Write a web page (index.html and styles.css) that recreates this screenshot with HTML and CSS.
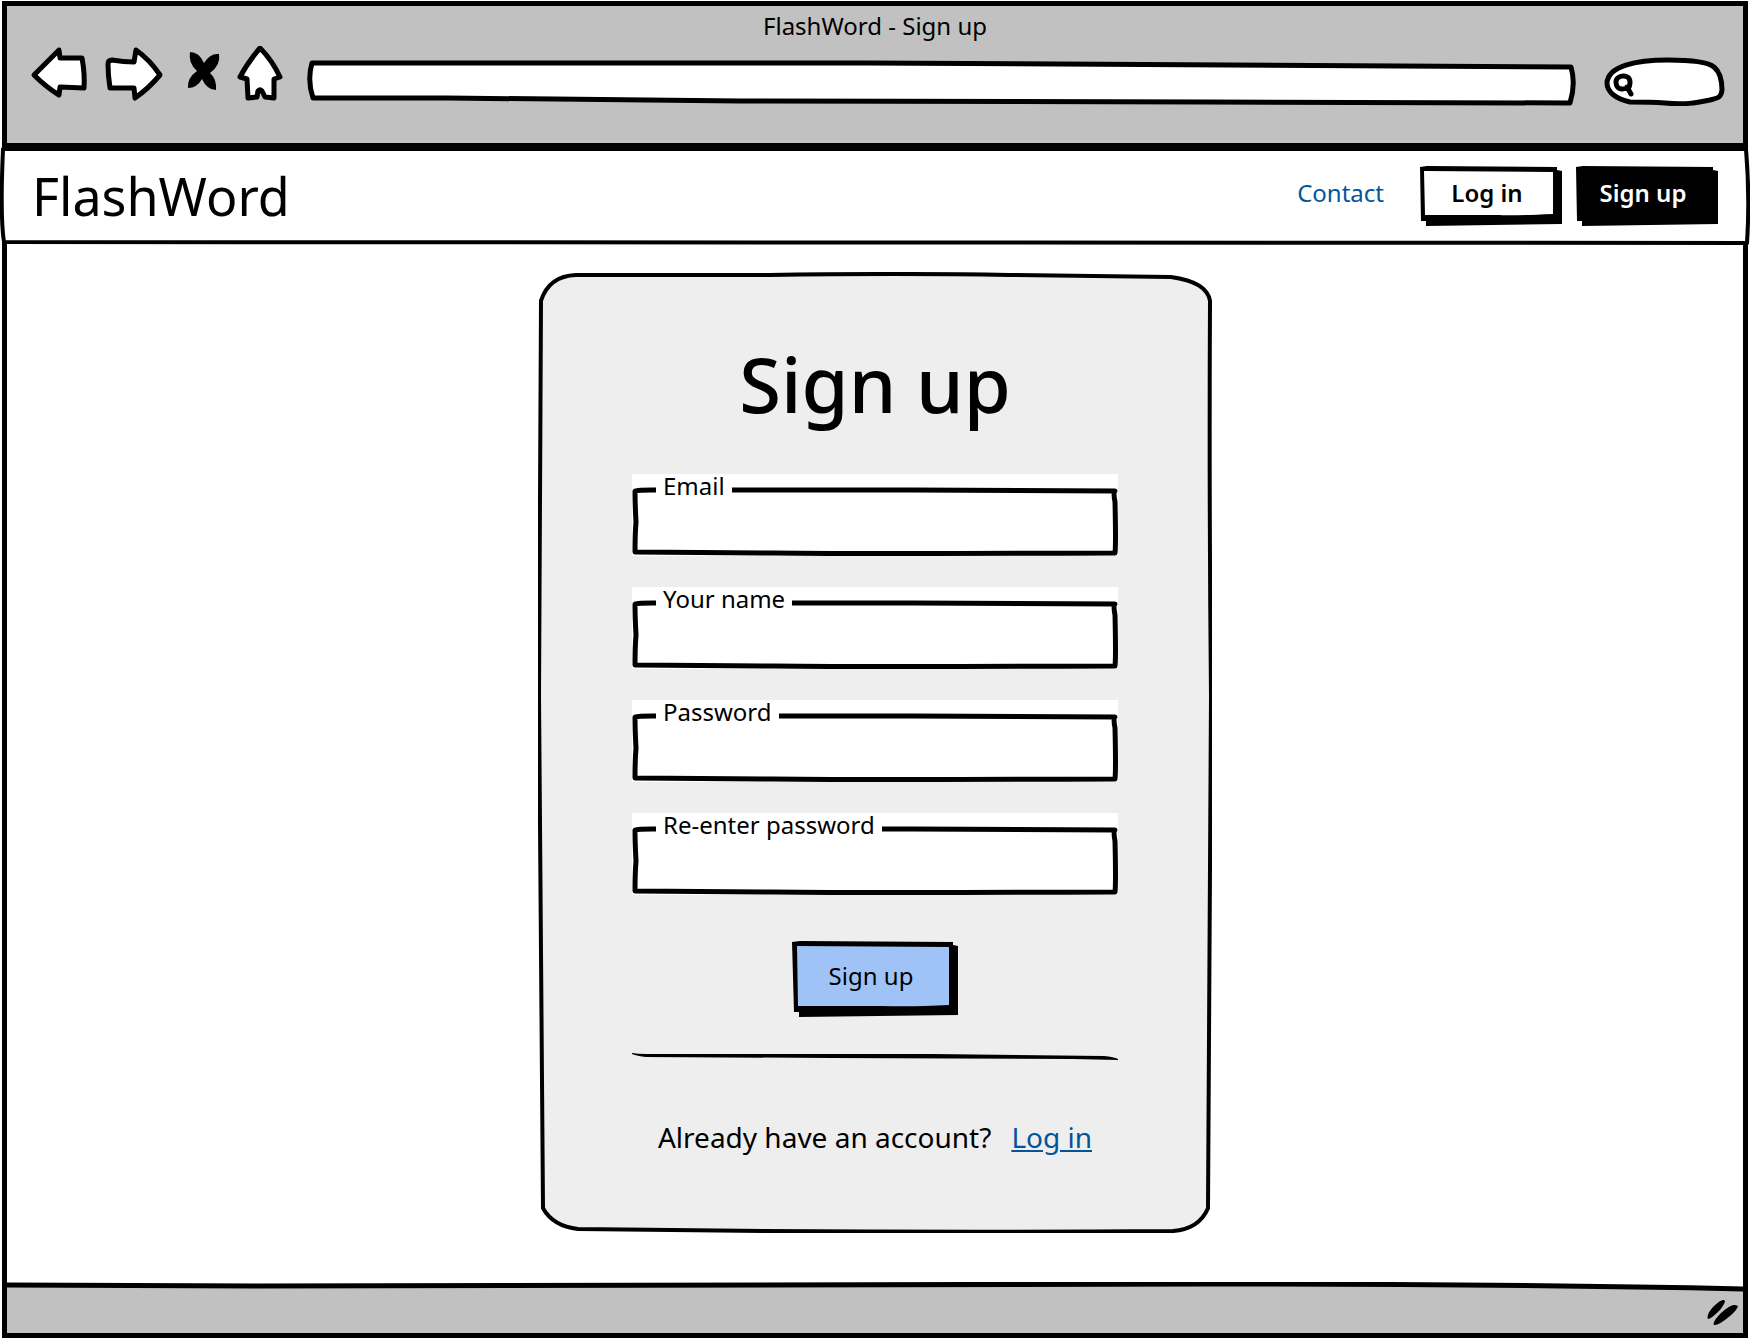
FILE: index.html
```html
<!DOCTYPE html>
<html lang="en">
<head>
<meta charset="utf-8">
<title>FlashWord - Sign up</title>
<link rel="stylesheet" href="styles.css">
</head>
<body>
<div class="window">
  <header class="chrome">
    <div class="chrome-title">FlashWord - Sign up</div>
    <div class="toolbar">
      <div class="toolbar-buttons">
        <button class="tool" type="button" aria-label="Back">
          <svg width="60" height="60" viewBox="29 46 60 60"><path class="ink" d="M59 50 L34 75 Q46 87 59 95 L60 87 L84 88 Q85 74 82 58 L60 58 Z"/></svg>
        </button>
        <button class="tool" type="button" aria-label="Forward">
          <svg width="60" height="60" viewBox="105 46 60 60"><path class="ink" d="M136 50 Q150 60 160 75 Q148 89 135 98 L134 88 L110 88 Q108 75 108 64 Q108 60 112 60 Q124 62 134 62 Z"/></svg>
        </button>
        <button class="tool" type="button" aria-label="Stop">
          <svg width="40" height="60" viewBox="181 46 40 60"><path d="M190 52 Q199 52 204 63 Q210 53 219 54 Q221 65 210 73 Q217 79 216 90 Q207 90 202 79 Q197 88 188 88 Q187 78 197 71 Q188 63 190 52 Z"/></svg>
        </button>
        <button class="tool" type="button" aria-label="Home">
          <svg width="46" height="60" viewBox="237 46 46 60"><path class="ink" d="M260 48 Q248 62 240 77 L247 79 L248 98 L257 97 L258 91 Q260 89 262 91 L265 97 L274 98 L274 79 L280 77 Q272 60 260 48 Z"/></svg>
        </button>
      </div>
      <div class="address">
        <svg class="sketch" viewBox="0 0 1270 60" preserveAspectRatio="none"><path class="ink" d="M5 17 H560 L1264 21 Q1269 38 1263 57 L900 56 L433 55 L140 52 L6 52 Q0 34 5 17 Z"/></svg>
        <input class="bare" type="text" aria-label="Address">
      </div>
      <div class="search">
        <svg class="sketch" viewBox="1601 46 124 60" preserveAspectRatio="none"><path class="ink" d="M1607 83 C1608 66 1636 60 1668 60 C1690 60 1708 62 1714 67 C1720 72 1722 82 1722 90 C1721 98 1718 98 1710 100 C1695 103 1685 105 1665 103 C1652 102 1640 102 1630 102 C1616 99 1607 92 1607 83 Z"/><path class="ink" d="M1616 82 C1616 75 1630 73 1630 82 C1630 90 1626 88 1622 89 C1618 89 1616 86 1616 82 Z M1627 87 L1631 94"/></svg>
        <input class="bare" type="search" aria-label="Search">
      </div>
    </div>
  </header>

  <nav class="site-nav">
    <svg class="sketch" viewBox="0 0 1750 98" preserveAspectRatio="none"><path class="ink thin" d="M3 2 Q0 70 4 95 L1747 96 Q1750 50 1746 2 Z"/></svg>
    <a class="logo" href="#">FlashWord</a>
    <div class="nav-links">
      <a class="contact" href="#">Contact</a>
      <div class="nav-buttons">
        <button class="button nav-button" type="button">
          <svg class="sketch" viewBox="0 0 142 60" preserveAspectRatio="none"><path d="M0 1 L7 0 L137 1 V4 L142 5 V58 L6 60 V55 H1 Z"/><path class="face" d="M4 5 L133 6 V48 Q90 50 80 49 L5 49 Z"/></svg>
          <span>Log in</span>
        </button>
        <button class="button nav-button dark" type="button">
          <svg class="sketch" viewBox="0 0 142 60" preserveAspectRatio="none"><path d="M0 1 L7 0 L137 1 V4 L142 5 V58 L6 60 V55 H1 Z"/></svg>
          <span>Sign up</span>
        </button>
      </div>
    </div>
  </nav>

  <main class="page">
    <section class="card">
      <svg class="sketch" viewBox="539 272 674 970" preserveAspectRatio="none"><path class="ink thin card-face" d="M542 301 Q550 276 577 275 L770 275 Q900 273 1010 275 L1172 277 Q1208 282 1211 301 Q1210 500 1212 700 L1209 1217 Q1200 1238 1174 1240 Q880 1242 579 1238 Q554 1235 544 1217 L540 700 Z"/></svg>
      <h1>Sign up</h1>
      <form>
        <div class="field">
          <svg class="sketch" viewBox="0 0 486 82" preserveAspectRatio="none"><path class="ink" d="M3 17 Q6 16 20 16 H280 L483 17 Q481 18 483 28 Q484 70 483 79 Q240 80 140 79 L3 78 Q3 60 4 48 Q3 30 3 17 Z"/></svg>
          <label for="email">Email</label>
          <input class="bare" id="email" type="email">
        </div>
        <div class="field">
          <svg class="sketch" viewBox="0 0 486 82" preserveAspectRatio="none"><path class="ink" d="M3 17 Q6 16 20 16 H280 L483 17 Q481 18 483 28 Q484 70 483 79 Q240 80 140 79 L3 78 Q3 60 4 48 Q3 30 3 17 Z"/></svg>
          <label for="name">Your name</label>
          <input class="bare" id="name" type="text">
        </div>
        <div class="field">
          <svg class="sketch" viewBox="0 0 486 82" preserveAspectRatio="none"><path class="ink" d="M3 17 Q6 16 20 16 H280 L483 17 Q481 18 483 28 Q484 70 483 79 Q240 80 140 79 L3 78 Q3 60 4 48 Q3 30 3 17 Z"/></svg>
          <label for="password">Password</label>
          <input class="bare" id="password" type="password">
        </div>
        <div class="field">
          <svg class="sketch" viewBox="0 0 486 82" preserveAspectRatio="none"><path class="ink" d="M3 17 Q6 16 20 16 H280 L483 17 Q481 18 483 28 Q484 70 483 79 Q240 80 140 79 L3 78 Q3 60 4 48 Q3 30 3 17 Z"/></svg>
          <label for="repeat">Re-enter password</label>
          <input class="bare" id="repeat" type="password">
        </div>
        <button class="button submit" type="submit">
          <svg class="sketch" viewBox="0 0 166 76" preserveAspectRatio="none"><path d="M0 1 L8 0 L161 1 V4 L166 5 V74 L7 76 V71 H2 Z"/><path class="face" d="M5 5 L157 6 V64 Q120 66 90 65 L6 65 Z"/></svg>
          <span>Sign up</span>
        </button>
      </form>
      <svg class="divider" height="8" viewBox="0 0 486 8" preserveAspectRatio="none"><path d="M0 0 Q6 1 14 1 L300 1 L472 3 Q482 4 486 6 V7 L440 6 L200 5 L14 4 Q5 3 0 1 Z"/></svg>
      <p class="switch">Already have an account? <a href="#">Log in</a></p>
    </section>
  </main>

  <footer class="status">
    <svg class="sketch" viewBox="0 0 1736 51" preserveAspectRatio="none"><path class="ink status-face" d="M-4 3 L250 4 Q700 2 1200 2 Q1500 2 1740 7 V60 H-4 Z"/></svg>
    <svg class="grip" width="32" height="28" viewBox="1707 1300 32 28"><path d="M1708 1321 Q1706 1317 1713 1309 Q1721 1301 1724 1302 Q1727 1303 1720 1312 Q1711 1321 1708 1321 Z M1714 1327 Q1712 1324 1721 1315 Q1731 1306 1735 1307 L1738 1308 Q1737 1312 1730 1318 Q1718 1328 1714 1327 Z"/></svg>
  </footer>
</div>
</body>
</html>
```
FILE: styles.css
```css
* {
  box-sizing: border-box;
}

body {
  margin: 0;
  background: #fff;
  color: #000;
  font-family: "Noto Sans", sans-serif;
  font-size: 24px;
  line-height: 32px;
}

button,
input {
  margin: 0;
  padding: 0;
  border: 0;
  background: none;
  color: inherit;
  font: inherit;
}

a {
  color: #04549a;
}

svg {
  display: block;
}

/* Hand-drawn outline that stretches with its box */
.sketch {
  position: absolute;
  inset: 0;
  width: 100%;
  height: 100%;
}

.ink {
  fill: #fff;
  stroke: #000;
  stroke-width: 5px;
  stroke-linejoin: round;
  stroke-linecap: round;
  vector-effect: non-scaling-stroke;
}

.thin {
  stroke-width: 4px;
}

.bare {
  position: relative;
  display: block;
  width: 100%;
  height: 100%;
  outline: 0;
}

.window {
  display: flex;
  flex-direction: column;
  min-height: calc(100vh - 3px);
  margin: 1px 2px 2px;
  border: 5px solid #000;
}

/* Browser bar */
.chrome {
  height: 143px;
  background: #c1c1c1;
  border-bottom: 6px solid #000;
}

.chrome-title {
  line-height: 40px;
  text-align: center;
}

.toolbar {
  display: flex;
  gap: 24px;
  height: 60px;
  padding: 0 18px 0 22px;
}

.toolbar-buttons {
  display: flex;
  gap: 16px;
}

.address {
  position: relative;
  flex: 1;
  padding: 20px 12px 10px;
}

.search {
  position: relative;
  width: 124px;
  padding: 18px 8px 8px 36px;
}

/* Site navigation */
.site-nav {
  position: relative;
  display: flex;
  align-items: center;
  justify-content: space-between;
  height: 98px;
  margin: -2px -7px 0;
  padding: 0 32px;
}

.logo {
  position: relative;
  color: #000;
  font-size: 52px;
  line-height: 64px;
  text-decoration: none;
}

.nav-links {
  position: relative;
  display: flex;
  align-items: center;
  gap: 36px;
}

.contact {
  padding-bottom: 6px;
  text-decoration: none;
}

.nav-buttons {
  display: flex;
  gap: 14px;
}

.button {
  position: relative;
  cursor: pointer;
}

.button span {
  position: relative;
}

.face {
  fill: #fff;
}

.nav-button {
  width: 142px;
  height: 60px;
  padding: 0 8px 6px 0;
  font-weight: 600;
}

.dark {
  color: #fff;
}

/* Sign-up card */
.page {
  flex: 1;
  padding: 27px 24px 40px;
}

.card {
  position: relative;
  display: flex;
  flex-direction: column;
  align-items: center;
  max-width: 674px;
  margin: 0 auto;
  padding: 64px 94px 76px;
}

.card-face {
  fill: #eee;
}

h1 {
  position: relative;
  margin: 0 0 42px;
  font-size: 76px;
  line-height: 96px;
  font-weight: 500;
}

form {
  position: relative;
  display: flex;
  flex-direction: column;
  align-items: center;
  gap: 31px;
  width: 100%;
}

.field {
  position: relative;
  width: 100%;
  height: 82px;
  padding: 20px 8px 8px;
  background: #fff;
}

.field label {
  position: absolute;
  top: 0;
  left: 24px;
  z-index: 1;
  padding: 0 7px;
  background: #fff;
  line-height: 24px;
}

.submit {
  width: 166px;
  height: 76px;
  margin-top: 15px;
  padding: 0 8px 6px 0;
}

.submit .face {
  fill: #9fc3f7;
}

.divider {
  position: relative;
  width: 100%;
  margin-top: 36px;
}

.switch {
  position: relative;
  display: flex;
  gap: 20px;
  margin: 56px 0 0;
  font-size: 28px;
  line-height: 40px;
  white-space: nowrap;
}

/* Status bar */
.status {
  position: relative;
  display: flex;
  align-items: center;
  justify-content: flex-end;
  height: 51px;
  padding: 8px 4px 0;
  overflow: hidden;
}

.status-face {
  fill: #c1c1c1;
}

.grip {
  position: relative;
}
```
